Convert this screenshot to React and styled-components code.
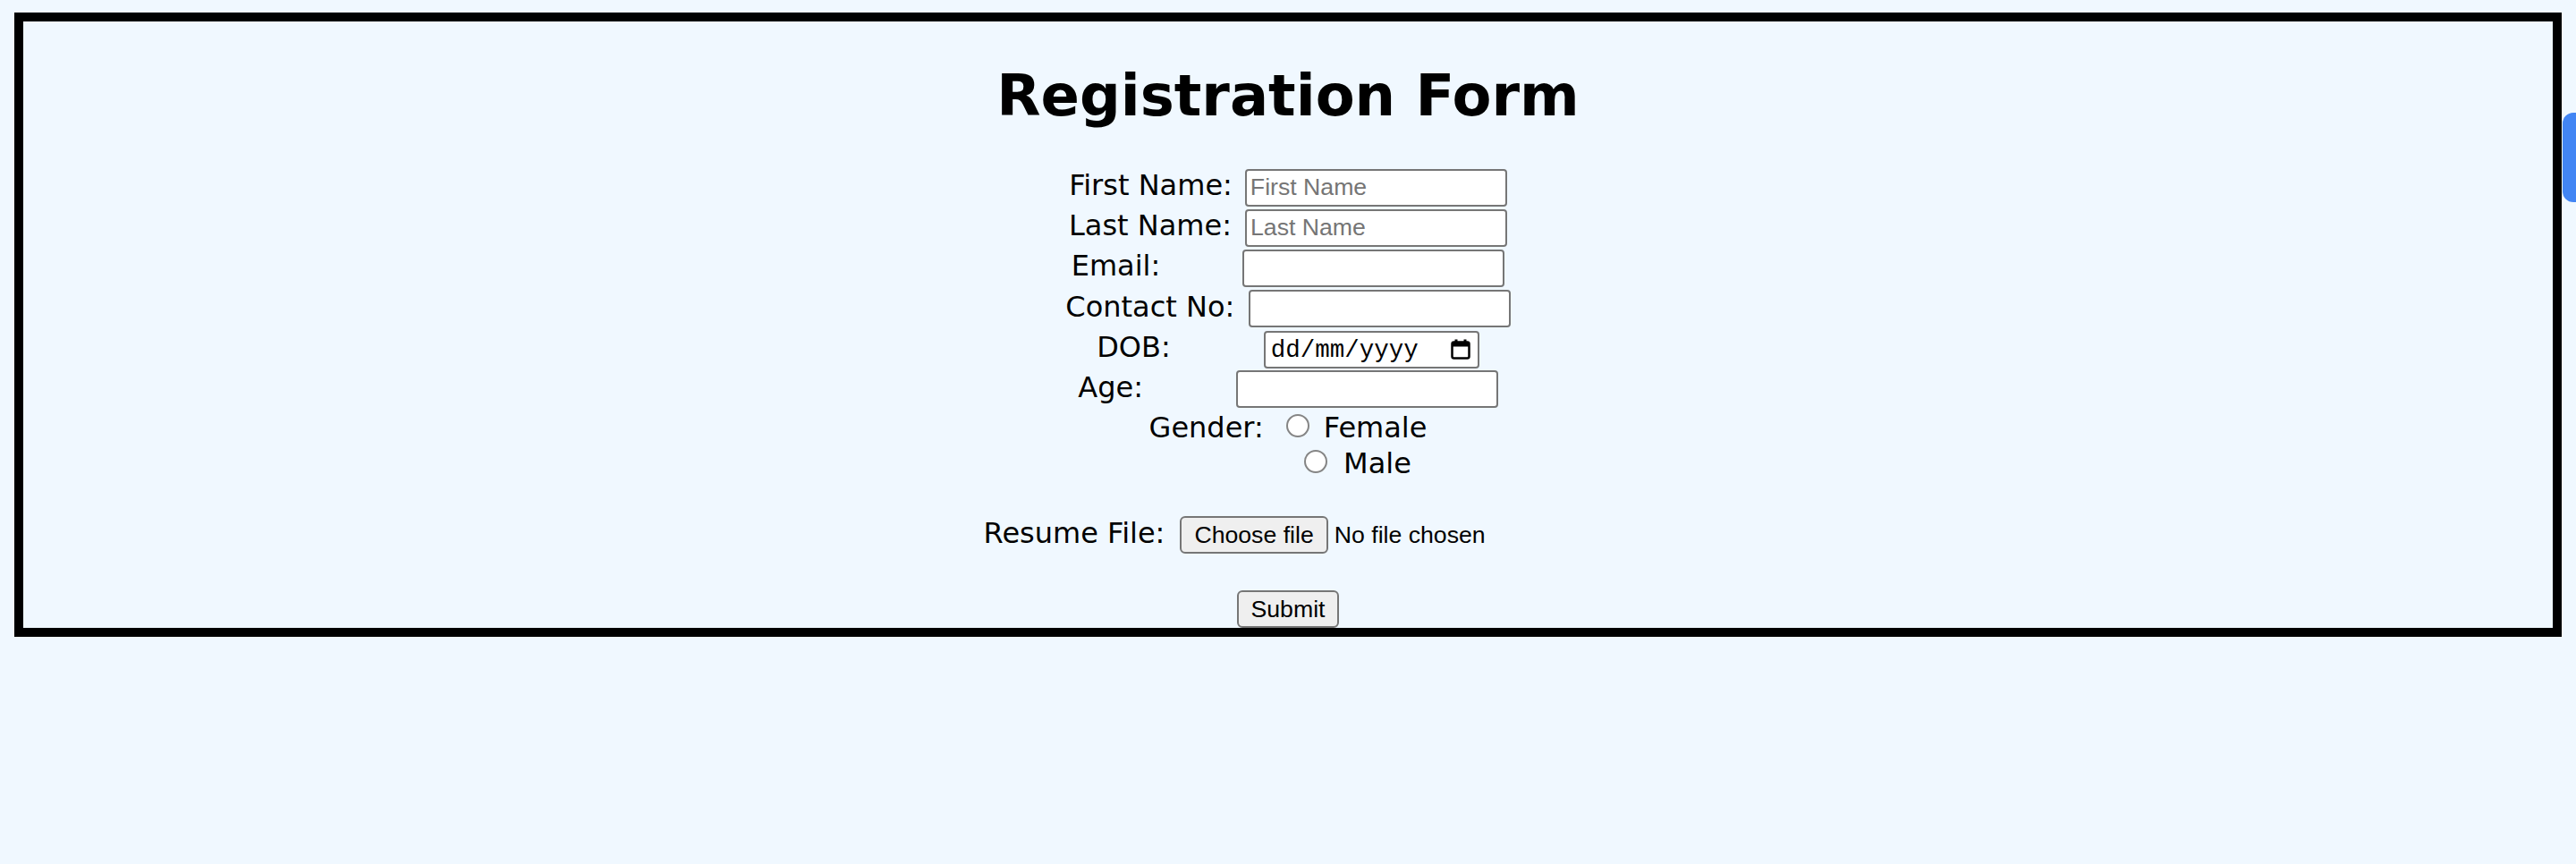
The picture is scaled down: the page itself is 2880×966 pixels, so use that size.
import React from 'react';
import styled, { createGlobalStyle } from 'styled-components';

const GlobalStyle = createGlobalStyle`
  html, body {
    margin: 0;
    background: #f0f8ff;
  }
  body {
    font-family: "DejaVu Sans", Verdana, sans-serif;
    color: #000;
  }
`;

const Page = styled.main`
  box-sizing: border-box;
  min-height: 966px;
  padding: 14px 16px 0;
`;

const Frame = styled.section`
  display: flex;
  flex-direction: column;
  align-items: stretch;
  border: 10px solid #000;
`;

const Title = styled.h1`
  margin: 46px 0 44px;
  font-size: 64px;
  font-weight: 700;
  text-align: center;
`;

const Form = styled.form`
  display: flex;
  flex-direction: column;
`;

const Row = styled.div`
  box-sizing: border-box;
  display: flex;
  justify-content: center;
  align-items: baseline;
  height: ${(p) => p.$h || 45.2}px;
  margin-top: ${(p) => p.$mt || 0}px;
  padding-left: ${(p) => p.$indent || 0}px;
`;

const Label = styled.label`
  font-size: 32px;
  white-space: nowrap;
  margin-right: ${(p) => p.$gap || 0}px;
`;

const Field = styled.input`
  box-sizing: border-box;
  width: ${(p) => p.$w || 293}px;
  height: 42px;
  margin: 0;
  padding: 0 4px;
  border: 2px solid #767676;
  border-radius: 4px;
  background: #fff;
  font-family: "Liberation Sans", Arial, sans-serif;
  font-size: 26.67px;
  color: #000;
  outline: none;

  &::placeholder {
    color: #757575;
  }
`;

const DateWrap = styled.span`
  position: relative;
  display: inline-flex;
`;

const DateField = styled(Field)`
  padding: 0 40px 0 6px;
  font-family: "Liberation Mono", "Courier New", monospace;
  font-size: 27.5px;

  &::placeholder {
    color: #000;
  }
`;

const CalendarIcon = styled.svg`
  position: absolute;
  right: 10px;
  top: 8px;
  pointer-events: none;
`;

const RadioOption = styled.label`
  display: inline-flex;
  align-items: baseline;
  gap: ${(p) => p.$gap || 17}px;
  font-size: 32px;
`;

const Radio = styled.input`
  appearance: none;
  box-sizing: border-box;
  width: 26px;
  height: 26px;
  margin: 0 0 -4px;
  border: 2px solid #858585;
  border-radius: 50%;
  background: #fff;
`;

const FileField = styled.span`
  display: inline-flex;
  align-items: baseline;
  gap: 7px;
  width: 461px;
`;

const HiddenFile = styled.input`
  display: none;
`;

const buttonBase = `
  box-sizing: border-box;
  display: inline-block;
  height: 42px;
  margin: 0;
  border: 2px solid #767676;
  border-radius: 6px;
  background: #efefef;
  font-family: "Liberation Sans", Arial, sans-serif;
  font-size: 26.67px;
  line-height: 38px;
  color: #000;
`;

const FileButton = styled.label`
  ${buttonBase}
  padding: 0 14px;
`;

const FileStatus = styled.span`
  font-family: "Liberation Sans", Arial, sans-serif;
  font-size: 26.67px;
`;

const SubmitButton = styled.button`
  ${buttonBase}
  padding: 0 13.5px;
`;

const SideTab = styled.div`
  position: fixed;
  top: 126px;
  right: 0;
  width: 15px;
  height: 100px;
  border-radius: 12px 0 0 12px;
  background: #4285f4;
`;

const textRows = [
  { id: 'fname', label: 'First Name:', gap: 14, placeholder: 'First Name' },
  { id: 'lname', label: 'Last Name:', gap: 15, placeholder: 'Last Name' },
  { id: 'email', label: 'Email:', gap: 92, type: 'email' },
  { id: 'contact', label: 'Contact No:', gap: 15.4, type: 'tel' },
];

export default function App() {
  return (
    <Page>
      <GlobalStyle />
      <Frame>
        <Title>Registration Form</Title>
        <Form onSubmit={(e) => e.preventDefault()}>
          {textRows.map((r) => (
            <Row key={r.id}>
              <Label htmlFor={r.id} $gap={r.gap}>{r.label}</Label>
              <Field id={r.id} type={r.type || 'text'} placeholder={r.placeholder} />
            </Row>
          ))}
          <Row>
            <Label htmlFor="dob" $gap={104}>DOB:</Label>
            <DateWrap>
              <DateField id="dob" $w={241} placeholder="dd/mm/yyyy" />
              <CalendarIcon width="22" height="24" viewBox="0 0 22 24">
                <rect x="1.5" y="4.5" width="19" height="18" rx="2" fill="none" stroke="#000" strokeWidth="2.5" />
                <rect x="1.5" y="4.5" width="19" height="5" fill="#000" />
                <rect x="4.5" y="1.5" width="3" height="4" fill="#000" />
                <rect x="14.5" y="1.5" width="3" height="4" fill="#000" />
              </CalendarIcon>
            </DateWrap>
          </Row>
          <Row>
            <Label htmlFor="age" $gap={103.7}>Age:</Label>
            <Field id="age" type="number" />
          </Row>
          <Row $h={40}>
            <Label $gap={25}>Gender:</Label>
            <RadioOption $gap={16}>
              <Radio type="radio" name="gender" value="female" />
              Female
            </RadioOption>
          </Row>
          <Row $h={40} $indent={156}>
            <RadioOption $gap={18}>
              <Radio type="radio" name="gender" value="male" />
              Male
            </RadioOption>
          </Row>
          <Row $h={42} $mt={37.5}>
            <Label $gap={17}>Resume File:</Label>
            <FileField>
              <FileButton>
                Choose file
                <HiddenFile type="file" />
              </FileButton>
              <FileStatus>No file chosen</FileStatus>
            </FileField>
          </Row>
          <Row $h={42} $mt={41.5}>
            <SubmitButton type="submit">Submit</SubmitButton>
          </Row>
        </Form>
      </Frame>
      <SideTab />
    </Page>
  );
}
